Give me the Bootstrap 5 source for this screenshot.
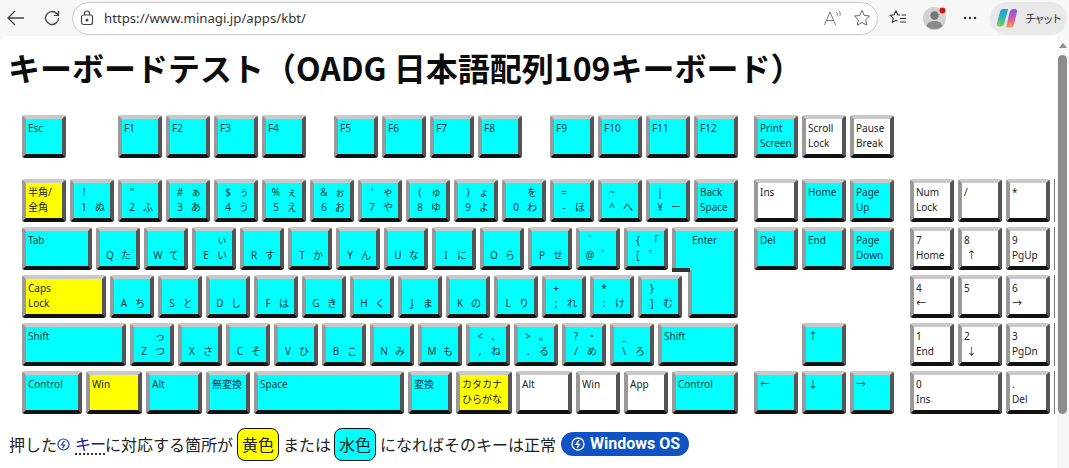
<!DOCTYPE html>
<html lang="ja">
<head>
<meta charset="utf-8">
<title>キーボードテスト</title>
<link href="https://cdn.jsdelivr.net/npm/bootstrap@5.3.0/dist/css/bootstrap.min.css" rel="stylesheet">
<style>
html,body{height:468px;overflow:hidden;background:#f7f7f7;font-family:"Noto Sans","Noto Sans CJK JP",sans-serif;color:#111}
.topbar{height:36px;background:#f7f7f7;padding-left:7px}
.tb-ic{display:block;flex:none}
.ic-reload{margin-left:18px}
.ic-star{margin-left:10px}
.ic-fav{margin-left:11px}
.ic-dots{margin-left:17px}
.urlpill{width:806px;height:33px;margin-left:11px;border:1px solid #c9c9c9;border-radius:17px;background:#fff;padding:0 6px 0 7px}
.urltext{font:13.2px "Noto Sans",sans-serif;color:#333;margin-left:10px}
.avatarbox{margin-left:16px;width:23px;height:23px}
.chatpill{width:77px;height:33px;border-radius:17px;background:#e9e9e9;margin-left:13px;padding-left:6px}
.chatlabel{font:11px "Noto Sans CJK JP",sans-serif;color:#333;margin-left:7px;white-space:nowrap;letter-spacing:-2.2px}
.sheet{height:432px}
.pagebody{width:1057px;background:#fff;border-top-left-radius:8px;padding:0 0 0 9px;overflow:hidden;flex:none}
.ttl{font:700 32px/38px "Noto Sans CJK JP","Noto Sans",sans-serif;color:#0b0b0b;margin:12px 0 0 -1px;white-space:nowrap}
.board{margin:29px 0 0 13px;width:1100px;display:flex;flex-direction:column;gap:5px}
.krow{display:flex;gap:4px}
.krow-top{margin-bottom:16px}
.kbk{box-sizing:border-box;position:relative;flex:none;width:44px;height:43px;border:4px solid;border-color:#c9c9c9 #555 #111 #999;border-radius:3px;padding:2px 0 0 2px;font-size:10px;line-height:15px;white-space:nowrap;color:#06393f}
.kc{background:#0ff}
.ky{background:#ff0;color:#222}
.kw{background:#fff;color:#222}
.kg{display:grid;grid-template-columns:16px 16px;grid-auto-rows:15px;text-align:center}
.kedge{flex:none;width:1px;height:43px;background:#777}
.w50{width:50px}.w56{width:56px}.w60{width:60px}.w66{width:66px}.w70{width:70px}.w80{width:80px}.w84{width:84px}.w92{width:92px}.w104{width:104px}.w150{width:150px}
.m2{margin-left:2px}.m12{margin-left:12px}.m24{margin-left:24px}.m48{margin-left:48px}.m60{margin-left:60px}.m168{margin-left:168px}
.entertop{border-bottom:0;border-bottom-left-radius:0;border-bottom-right-radius:0}
.entertop::after{content:"";position:absolute;left:-4px;bottom:-2px;width:18px;height:4px;background:#333;z-index:1}
.enterlow{border-top:0;border-top-left-radius:0;border-top-right-radius:0}
.enterlow::before{content:"";position:absolute;left:-4px;right:-4px;top:-5px;height:5px;border-left:4px solid #999;border-right:4px solid #555;background:#0ff}
.notice{font-size:16px;line-height:34px;margin:13px 0 0;color:#222;white-space:nowrap;font-family:"Noto Sans CJK JP",sans-serif}
.keylink{color:#1212b0;text-decoration:none;border-bottom:2px dotted #334;margin-left:5px;line-height:19px;display:inline-block;letter-spacing:-1px}
.chip{display:inline-block;border:1px solid #111;border-radius:8px;padding:0 4px;line-height:31px;height:33px;margin:0 4px}
.chip-y{background:#ff0}.chip-c{background:#0ff;margin-left:3px}
.oslabel{background:#0e52c4;color:#fff;font:700 16px/24px Roboto,sans-serif;border-radius:12px;height:24px;padding:0 9px 0 10px;margin-left:5px;gap:5px}
.scrollcol{width:12px;background:#f7f7f7;flex:none;padding:7px 1px 0}
.thumb{width:9px;height:359px;background:#8c8c8c;border-radius:5px;margin-top:7px}
.uparrow{width:0;height:0;margin:0 0 0 .5px;border:4px solid transparent;border-top:0;border-bottom:5px solid #8c8c8c}
</style>
</head>
<body class="m-0">
<header class="topbar d-flex align-items-center">
  <svg class="tb-ic" width="18" height="18" viewBox="0 0 18 18" fill="none" stroke="#444" stroke-width="1.3"><path d="M1 9h16M8 2 1 9l7 7"/></svg>
  <svg class="tb-ic ic-reload" width="18" height="18" viewBox="0 0 18 18" fill="none" stroke="#444" stroke-width="1.3"><path d="M15.500 9a6.500 6.500 0 1 1-2-4.700l2 2M15.500 1.800v4.500H11"/></svg>
  <div class="urlpill d-flex align-items-center">
    <svg class="tb-ic" width="14" height="16" viewBox="0 0 14 16" fill="none" stroke="#444" stroke-width="1.2"><rect x="1.500" y="5" width="11" height="9.500" rx="2"/><path d="M4.500 5V3.500a2.500 2.500 0 0 1 5 0V5"/><circle cx="7" cy="10" r=".9" fill="#444"/></svg>
    <span class="urltext flex-grow-1">https://www.minagi.jp/apps/kbt/</span>
    <svg class="tb-ic" width="20" height="18" viewBox="0 0 20 18" fill="none" stroke="#777" stroke-width="1"><path d="M1.500 16 7 3l5.500 13M3.500 11.500h7"/><path d="M13 3c1 .8 1.500 2 1.300 3.500M15.500 1.500c1.500 1.300 2 3.200 1.500 5"/></svg>
    <svg class="tb-ic ic-star" width="18" height="18" viewBox="0 0 18 18" fill="none" stroke="#666" stroke-width="1"><path d="m9 1.500 2.300 4.900 5.200.7-3.800 3.700 1 5.300L9 13.500l-4.700 2.600 1-5.300L1.500 7.100l5.200-.7z"/></svg>
  </div>
  <svg class="tb-ic ic-fav" width="18" height="18" viewBox="0 0 18 18" fill="none" stroke="#333" stroke-width="1.100"><path d="M11 6.200 8.800 5.800 7 2 5.200 5.800l-4 .6 2.900 2.800-.7 4L7 11.300l1.500.8M12.500 6H17M11 9.500h6M11 13h6"/></svg>
  <div class="position-relative avatarbox">
    <svg class="tb-ic" width="23" height="23" viewBox="0 0 23 23"><circle cx="11.500" cy="11.500" r="11.500" fill="#d2d2d2"/><circle cx="11.500" cy="8.500" r="4.200" fill="#777"/><path d="M3.500 19c1-3.600 4-5 8-5s7 1.400 8 5a11.500 11.500 0 0 1-16 0z" fill="#8a8a8a"/><circle cx="19.500" cy="3.500" r="3" fill="#d01818"/></svg>
  </div>
  <svg class="tb-ic ic-dots" width="14" height="4" viewBox="0 0 14 4" fill="#333"><circle cx="2" cy="2" r="1.200"/><circle cx="7" cy="2" r="1.200"/><circle cx="12" cy="2" r="1.200"/></svg>
  <div class="chatpill d-flex align-items-center">
    <svg class="tb-ic" width="22" height="22" viewBox="0 0 22 22"><defs><linearGradient id="cpa" x1="0" y1="0" x2="0" y2="1"><stop offset="0" stop-color="#1f9de8"/><stop offset=".55" stop-color="#2fb8a8"/><stop offset="1" stop-color="#8ccb4a"/></linearGradient><linearGradient id="cpb" x1="0" y1="0" x2="0" y2="1"><stop offset="0" stop-color="#7a5fe0"/><stop offset=".55" stop-color="#d95bb0"/><stop offset="1" stop-color="#f6a33c"/></linearGradient></defs><path d="M7 2h5L8.500 16c-.5 2-2 3.500-4 3.500H3C1.500 19.500.5 18 1 16L4 5C4.500 3 5.500 2 7 2z" fill="url(#cpa)"/><path d="M15 20.500h-5l3.500-15c.5-2 2-3.500 4-3.500H19c1.500 0 2.500 1.500 2 3l-3 12.500c-.5 2-1.500 3-3 3z" fill="url(#cpb)"/></svg>
    <span class="chatlabel">チャット</span>
  </div>
</header>
<div class="sheet d-flex">
  <main class="pagebody">
    <h1 class="ttl">キーボードテスト（OADG 日本語配列109キーボード）</h1>
    <div class="board">
      <div class="krow krow-top">
        <div class="kbk kc">Esc</div>
        <div class="kbk kc m48">F1</div><div class="kbk kc">F2</div><div class="kbk kc">F3</div><div class="kbk kc">F4</div>
        <div class="kbk kc m24">F5</div><div class="kbk kc">F6</div><div class="kbk kc">F7</div><div class="kbk kc">F8</div>
        <div class="kbk kc m24">F9</div><div class="kbk kc">F10</div><div class="kbk kc">F11</div><div class="kbk kc">F12</div>
        <div class="kbk kc m12">Print<br>Screen</div><div class="kbk kw">Scroll<br>Lock</div><div class="kbk kw">Pause<br>Break</div>
      </div>
      <div class="krow">
        <div class="kbk ky">半角/<br>全角</div>
        <div class="kbk kc kg"><span>!</span><span></span><span>1</span><span>ぬ</span></div>
        <div class="kbk kc kg"><span>"</span><span></span><span>2</span><span>ふ</span></div>
        <div class="kbk kc kg"><span>#</span><span>ぁ</span><span>3</span><span>あ</span></div>
        <div class="kbk kc kg"><span>$</span><span>ぅ</span><span>4</span><span>う</span></div>
        <div class="kbk kc kg"><span>%</span><span>ぇ</span><span>5</span><span>え</span></div>
        <div class="kbk kc kg"><span>&amp;</span><span>ぉ</span><span>6</span><span>お</span></div>
        <div class="kbk kc kg"><span>'</span><span>ゃ</span><span>7</span><span>や</span></div>
        <div class="kbk kc kg"><span>(</span><span>ゅ</span><span>8</span><span>ゆ</span></div>
        <div class="kbk kc kg"><span>)</span><span>ょ</span><span>9</span><span>よ</span></div>
        <div class="kbk kc kg"><span></span><span>を</span><span>0</span><span>わ</span></div>
        <div class="kbk kc kg"><span>=</span><span></span><span>-</span><span>ほ</span></div>
        <div class="kbk kc kg"><span>~</span><span></span><span>^</span><span>へ</span></div>
        <div class="kbk kc kg"><span>|</span><span></span><span>¥</span><span>ー</span></div>
        <div class="kbk kc">Back<br>Space</div>
        <div class="kbk kw m12">Ins</div><div class="kbk kc">Home</div><div class="kbk kc">Page<br>Up</div>
        <div class="kbk kw m12">Num<br>Lock</div><div class="kbk kw">/</div><div class="kbk kw">*</div><div class="kedge"></div>
      </div>
      <div class="krow">
        <div class="kbk kc w70">Tab</div>
        <div class="kbk kc kg"><span></span><span></span><span>Q</span><span>た</span></div>
        <div class="kbk kc kg"><span></span><span></span><span>W</span><span>て</span></div>
        <div class="kbk kc kg"><span></span><span>ぃ</span><span>E</span><span>い</span></div>
        <div class="kbk kc kg"><span></span><span></span><span>R</span><span>す</span></div>
        <div class="kbk kc kg"><span></span><span></span><span>T</span><span>か</span></div>
        <div class="kbk kc kg"><span></span><span></span><span>Y</span><span>ん</span></div>
        <div class="kbk kc kg"><span></span><span></span><span>U</span><span>な</span></div>
        <div class="kbk kc kg"><span></span><span></span><span>I</span><span>に</span></div>
        <div class="kbk kc kg"><span></span><span></span><span>O</span><span>ら</span></div>
        <div class="kbk kc kg"><span></span><span></span><span>P</span><span>せ</span></div>
        <div class="kbk kc kg"><span>`</span><span></span><span>@</span><span>゛</span></div>
        <div class="kbk kc kg"><span>{</span><span>「</span><span>[</span><span>゜</span></div>
        <div class="kbk kc w66 entertop ps-3">Enter</div>
        <div class="kbk kc m12">Del</div><div class="kbk kc">End</div><div class="kbk kc">Page<br>Down</div>
        <div class="kbk kw m12">7<br>Home</div><div class="kbk kw">8<br>&nbsp;↑</div><div class="kbk kw">9<br>PgUp</div><div class="kedge"></div>
      </div>
      <div class="krow">
        <div class="kbk ky w84">Caps<br>Lock</div>
        <div class="kbk kc kg"><span></span><span></span><span>A</span><span>ち</span></div>
        <div class="kbk kc kg"><span></span><span></span><span>S</span><span>と</span></div>
        <div class="kbk kc kg"><span></span><span></span><span>D</span><span>し</span></div>
        <div class="kbk kc kg"><span></span><span></span><span>F</span><span>は</span></div>
        <div class="kbk kc kg"><span></span><span></span><span>G</span><span>き</span></div>
        <div class="kbk kc kg"><span></span><span></span><span>H</span><span>く</span></div>
        <div class="kbk kc kg"><span></span><span></span><span>J</span><span>ま</span></div>
        <div class="kbk kc kg"><span></span><span></span><span>K</span><span>の</span></div>
        <div class="kbk kc kg"><span></span><span></span><span>L</span><span>り</span></div>
        <div class="kbk kc kg"><span>+</span><span></span><span>;</span><span>れ</span></div>
        <div class="kbk kc kg"><span>*</span><span></span><span>:</span><span>け</span></div>
        <div class="kbk kc kg"><span>}</span><span></span><span>]</span><span>む</span></div>
        <div class="kbk kc w50 m2 enterlow"></div>
        <div class="kbk kw m168">4<br>←</div><div class="kbk kw">5</div><div class="kbk kw">6<br>→</div><div class="kedge"></div>
      </div>
      <div class="krow">
        <div class="kbk kc w104">Shift</div>
        <div class="kbk kc kg"><span></span><span>っ</span><span>Z</span><span>つ</span></div>
        <div class="kbk kc kg"><span></span><span></span><span>X</span><span>さ</span></div>
        <div class="kbk kc kg"><span></span><span></span><span>C</span><span>そ</span></div>
        <div class="kbk kc kg"><span></span><span></span><span>V</span><span>ひ</span></div>
        <div class="kbk kc kg"><span></span><span></span><span>B</span><span>こ</span></div>
        <div class="kbk kc kg"><span></span><span></span><span>N</span><span>み</span></div>
        <div class="kbk kc kg"><span></span><span></span><span>M</span><span>も</span></div>
        <div class="kbk kc kg"><span>&lt;</span><span>、</span><span>,</span><span>ね</span></div>
        <div class="kbk kc kg"><span>&gt;</span><span>。</span><span>.</span><span>る</span></div>
        <div class="kbk kc kg"><span>?</span><span>・</span><span>/</span><span>め</span></div>
        <div class="kbk kc kg"><span>_</span><span></span><span>\</span><span>ろ</span></div>
        <div class="kbk kc w80">Shift</div>
        <div class="kbk kc m60">↑</div>
        <div class="kbk kw m60">1<br>End</div><div class="kbk kw">2<br>&nbsp;↓</div><div class="kbk kw">3<br>PgDn</div><div class="kedge"></div>
      </div>
      <div class="krow">
        <div class="kbk kc w60">Control</div>
        <div class="kbk ky w56">Win</div>
        <div class="kbk kc w56">Alt</div>
        <div class="kbk kc">無変換</div>
        <div class="kbk kc w150">Space</div>
        <div class="kbk kc">変換</div>
        <div class="kbk ky w56">カタカナ<br>ひらがな</div>
        <div class="kbk kw w56">Alt</div>
        <div class="kbk kw">Win</div>
        <div class="kbk kw">App</div>
        <div class="kbk kc w66">Control</div>
        <div class="kbk kc m12">←</div><div class="kbk kc">↓</div><div class="kbk kc">→</div>
        <div class="kbk kw m12 w92">0<br>Ins</div><div class="kbk kw">.<br>Del</div><div class="kedge"></div>
      </div>
    </div>
    <p class="notice d-flex align-items-center">押した<svg class="tb-ic" width="13" height="13" viewBox="0 0 13 13" fill="none" stroke="#1a3fa8" stroke-width="1.200"><circle cx="6.500" cy="6.500" r="5.500"/><path d="M7.500 2.800 4.500 7h3l-2 3.200"/></svg><a href="#" class="keylink">キー</a>に対応する箇所が<span class="chip chip-y">黄色</span>または<span class="chip chip-c">水色</span>になればそのキーは正常<span class="oslabel d-inline-flex align-items-center"><svg class="tb-ic" width="14" height="14" viewBox="0 0 14 14" fill="none" stroke="#fff" stroke-width="1.300"><circle cx="7" cy="7" r="6"/><path d="M8 3.200 5 7.300h3.500l-2.500 3.500"/></svg>Windows OS</span></p>
  </main>
  <aside class="scrollcol">
    <div class="uparrow"></div>
    <div class="thumb"></div>
  </aside>
</div>
<script src="https://cdn.jsdelivr.net/npm/bootstrap@5.3.0/dist/js/bootstrap.bundle.min.js"></script>
</body>
</html>
